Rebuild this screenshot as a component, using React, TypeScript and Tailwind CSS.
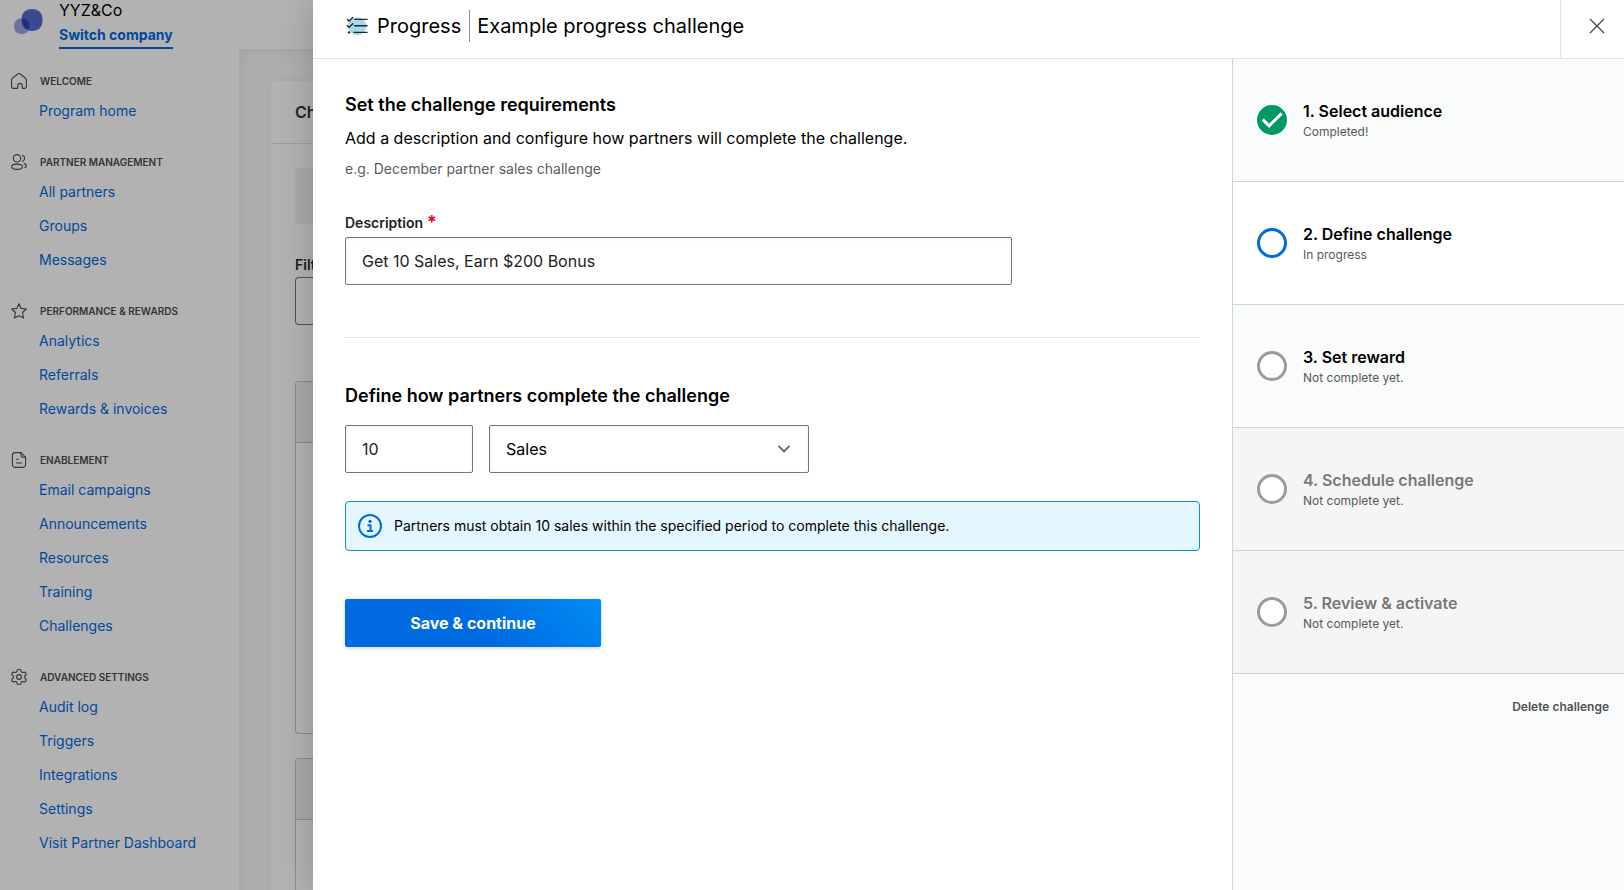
import { useState } from "react";
import type { ReactNode } from "react";
import { Settings } from "lucide-react";

type NavGroup = {
  title: string;
  icon: ReactNode;
  links: string[];
};

type StepStatus = "done" | "current" | "open" | "locked";

type Step = {
  title: string;
  detail: string;
  status: StepStatus;
};

function NavIcon({ children }: { children: ReactNode }) {
  return (
    <svg
      aria-hidden="true"
      className="size-4 shrink-0"
      fill="none"
      stroke="#4d4d4d"
      strokeLinecap="round"
      strokeLinejoin="round"
      strokeWidth="1.1"
      viewBox="0 0 16 16"
    >
      {children}
    </svg>
  );
}

const NAV_GROUPS: NavGroup[] = [
  {
    title: "Welcome",
    icon: (
      <NavIcon>
        <path d="M.6 7.2c0-.8.3-1.5.9-2L6.7 1c.8-.6 1.8-.6 2.6 0l5.2 4.2c.6.5.9 1.2.9 2v6.3c0 1.1-.8 1.9-1.9 1.9h-1.3c-.6 0-1-.4-1-1v-1.8a2.2 2.2 0 0 0-4.4 0v1.8c0 .6-.4 1-1 1H2.5C1.4 15.4.6 14.6.6 13.5z" />
      </NavIcon>
    ),
    links: ["Program home"],
  },
  {
    title: "Partner management",
    icon: (
      <NavIcon>
        <circle cx="6" cy="4.3" r="3.7" />
        <path d="M6 10.1c3 0 5.4 1 5.4 2.7S9 15.4 6 15.4.6 14.5.6 12.8s2.4-2.7 5.4-2.7z" />
        <path d="M11.5 1.2a3.4 3.4 0 0 1 0 6.3M13.2 9.6c1.4.4 2.2 1.2 2.2 2.2 0 .9-.7 1.6-1.8 2" />
      </NavIcon>
    ),
    links: ["All partners", "Groups", "Messages"],
  },
  {
    title: "Performance & rewards",
    icon: (
      <NavIcon>
        <path d="M8 .8l2.1 4.6 5.2.6-3.8 3.5 1.1 5.6L8 12.7l-4.6 2.4 1.1-5.6L.7 6l5.2-.6z" />
      </NavIcon>
    ),
    links: ["Analytics", "Referrals", "Rewards & invoices"],
  },
  {
    title: "Enablement",
    icon: (
      <NavIcon>
        <path d="M10 .6H4.3a2.9 2.9 0 0 0-2.9 2.9v9a2.9 2.9 0 0 0 2.9 2.9h7.4a2.9 2.9 0 0 0 2.9-2.9V5.3z" />
        <path d="M10 .6v2.5c0 1.2.9 2.2 2.1 2.2h2.5M5.6 7.3h1.6M5.6 11h4.8" />
      </NavIcon>
    ),
    links: [
      "Email campaigns",
      "Announcements",
      "Resources",
      "Training",
      "Challenges",
    ],
  },
  {
    title: "Advanced settings",
    icon: (
      <NavIcon>
        <Settings color="#4d4d4d" size={19} strokeWidth={1.4} x={-1.5} y={-1.5} />
      </NavIcon>
    ),
    links: [
      "Audit log",
      "Triggers",
      "Integrations",
      "Settings",
      "Visit Partner Dashboard",
    ],
  },
];

const STEPS: Step[] = [
  { title: "1. Select audience", detail: "Completed!", status: "done" },
  { title: "2. Define challenge", detail: "In progress", status: "current" },
  { title: "3. Set reward", detail: "Not complete yet.", status: "open" },
  { title: "4. Schedule challenge", detail: "Not complete yet.", status: "locked" },
  { title: "5. Review & activate", detail: "Not complete yet.", status: "locked" },
];

const STEP_BACKGROUND: Record<StepStatus, string> = {
  done: "bg-[#fafcfb]",
  current: "bg-white",
  open: "bg-[#fafcfb]",
  locked: "bg-[#f5f5f5]",
};

function Sidebar() {
  return (
    <aside className="w-[239px] shrink-0 bg-white">
      <div className="flex h-[68px] gap-[15px] pl-3">
        <svg
          aria-hidden="true"
          className="mt-2 h-7 w-8 shrink-0"
          viewBox="0 0 32 28"
        >
          <rect x="2" y="10.5" width="15.5" height="15.5" rx="7" fill="#98a6e6" />
          <rect x="9.5" y="1" width="21" height="22" rx="9.5" fill="#5567d2" />
          <path
            d="M10.5 10.6c4-.6 7.3 3 6.9 7.4-.1 1.4-.6 2.6-1.3 3.6-3.8-1.5-6.6-5.7-5.6-11z"
            fill="#33449f"
          />
        </svg>
        <div className="flex flex-col items-start">
          <span className="text-base leading-5 text-black">YYZ&amp;Co</span>
          <a
            className="flex h-[29px] items-center border-b-2 border-[#006ae0] pt-[2px] text-sm font-bold text-[#006ae0]"
            href="#switch"
          >
            Switch company
          </a>
        </div>
      </div>
      <nav>
        {NAV_GROUPS.map((group) => (
          <section className="pb-[21px] pl-[11px]" key={group.title}>
            <h2 className="flex h-[26px] items-center gap-[13px] text-[10px] font-semibold text-[#4d4d4d] uppercase">
              {group.icon}
              {group.title}
            </h2>
            <ul className="pl-7">
              {group.links.map((link) => (
                <li className="flex h-[34px] items-center" key={link}>
                  <a className="text-sm text-[#006ae0]" href="#nav">
                    {link}
                  </a>
                </li>
              ))}
            </ul>
          </section>
        ))}
      </nav>
    </aside>
  );
}

// Only a narrow strip of this page shows beside the drawer.
function ChallengesPage() {
  return (
    <div className="flex min-w-0 flex-1 flex-col">
      <div className="h-[49px] shrink-0 bg-white" />
      <div className="flex-1 bg-[#f8fafc] pt-8 pl-8 shadow-[inset_4px_4px_12px_rgba(0,0,0,0.06)]">
        <div className="h-full rounded-tl bg-white shadow-[0_0_12px_rgba(0,0,0,0.05)]">
          <div className="flex h-[63px] items-center border-b border-[#e3e3e3] pl-6">
            <h2 className="font-semibold text-[#2f363d]">Ch</h2>
          </div>
          <div className="pt-6 pl-6">
            <div className="h-14 rounded-l bg-[#eff5fa]" />
            <div className="mt-[31px] text-sm font-semibold text-[#2b2b2b]">
              Filt
            </div>
            <div className="mt-[2px] h-12 rounded-l-sm border border-r-0 border-[#767676]" />
            <div className="mt-14 h-[353px] rounded-l-sm border border-r-0 border-[#c4c8ca]">
              <div className="h-[61px] border-b border-[#c4c8ca] bg-[#f0f4f3]" />
            </div>
            <div className="mt-6 h-[353px] rounded-l-sm border border-r-0 border-[#c4c8ca]">
              <div className="h-[61px] border-b border-[#c4c8ca] bg-[#f0f4f3]" />
            </div>
          </div>
        </div>
      </div>
    </div>
  );
}

function ProgressIcon() {
  return (
    <svg aria-hidden="true" className="h-5 w-6 shrink-0" viewBox="0 0 24 20">
      <circle cx="12.2" cy="10.2" r="9" fill="#a8d8ea" />
      <g fill="none" stroke="#1f2a33" strokeLinecap="round" strokeWidth="1.4">
        <path d="M10 3.4h12M9.5 9.8H22M9 16.4h13" />
        <path d="M2.4 3.6l1.6 1.5 3.8-3.6M2.4 9.8L4 11.3l3.8-3.6" />
      </g>
      <circle cx="4" cy="16.4" r="1.2" fill="#1f2a33" />
    </svg>
  );
}

function StepMarker({ status }: { status: StepStatus }) {
  if (status === "done") {
    return (
      <svg aria-hidden="true" className="size-[30px] shrink-0" viewBox="0 0 30 30">
        <circle cx="15" cy="15" r="15" fill="#009966" />
        <path
          d="M5.8 14.6l6.4 6.2L24.6 8.4"
          fill="none"
          stroke="#fff"
          strokeWidth="3"
        />
      </svg>
    );
  }

  return (
    <span
      className={`size-[30px] shrink-0 rounded-full border-3 bg-white ${
        status === "current" ? "border-[#006ae0]" : "border-[#999c9f]"
      }`}
    />
  );
}

function StepList() {
  return (
    <aside className="w-[392px] shrink-0 border-l border-[#cfd4d8] bg-[#fafcfb]">
      <ol>
        {STEPS.map((step) => (
          <li
            className={`flex h-[123px] items-center gap-4 border-b border-[#cfd4d8] pl-6 ${STEP_BACKGROUND[step.status]}`}
            key={step.title}
          >
            <StepMarker status={step.status} />
            <div>
              <h3
                className={`text-base leading-6 font-semibold ${
                  step.status === "locked" ? "text-[#77797b]" : "text-black"
                }`}
              >
                {step.title}
              </h3>
              <p className="text-xs leading-[18px] text-[#57595b]">
                {step.detail}
              </p>
            </div>
          </li>
        ))}
      </ol>
      <div className="flex justify-end pt-6 pr-[15px]">
        <button
          type="button"
          className="cursor-pointer text-xs leading-[18px] font-semibold text-[#4f5153]"
        >
          Delete challenge
        </button>
      </div>
    </aside>
  );
}

function ChallengeForm() {
  const [description, setDescription] = useState("Get 10 Sales, Earn $200 Bonus");
  const [amount, setAmount] = useState("10");
  const [metric, setMetric] = useState("Sales");

  return (
    <form
      className="min-w-0 flex-1 px-8 pt-8"
      onSubmit={(event) => event.preventDefault()}
    >
      <h2 className="text-lg leading-7 font-semibold text-black">
        Set the challenge requirements
      </h2>
      <p className="mt-[7px] text-base leading-6 text-black">
        Add a description and configure how partners will complete the challenge.
      </p>
      <p className="mt-[9px] text-sm leading-5 text-[#5a5c5f]">
        e.g. December partner sales challenge
      </p>

      <label
        className="mt-8 flex h-[26px] gap-1 text-sm leading-6 font-semibold text-[#222222]"
        htmlFor="description"
      >
        Description
        <span className="text-lg leading-6 text-[#e0001b]">*</span>
      </label>
      <input
        id="description"
        className="h-12 w-full max-w-[667px] rounded-xs border border-[#767676] px-4 text-base text-[#222222] shadow-[inset_0_1px_4px_rgba(0,0,0,0.06)]"
        value={description}
        onChange={(event) => setDescription(event.target.value)}
      />

      <hr className="mt-[52px] border-[#dfe3e9]" />

      <h2 className="mt-11 text-lg leading-7 font-semibold text-black">
        Define how partners complete the challenge
      </h2>
      <div className="mt-[15px] flex gap-4">
        <input
          aria-label="Amount"
          className="h-12 w-32 rounded-xs border border-[#767676] px-4 text-base text-[#222222] shadow-[inset_0_1px_4px_rgba(0,0,0,0.06)]"
          value={amount}
          onChange={(event) => setAmount(event.target.value)}
        />
        <div className="grid w-80 items-center">
          <select
            aria-label="Metric"
            className="col-start-1 row-start-1 h-12 w-full appearance-none rounded-xs border border-[#767676] bg-white px-4 text-base text-black shadow-[inset_0_1px_4px_rgba(0,0,0,0.06)]"
            value={metric}
            onChange={(event) => setMetric(event.target.value)}
          >
            <option>Sales</option>
          </select>
          <svg
            aria-hidden="true"
            className="pointer-events-none col-start-1 row-start-1 mr-[19px] h-2 w-3 justify-self-end"
            fill="none"
            stroke="#5f6b7a"
            strokeWidth="1.8"
            viewBox="0 0 12 8"
          >
            <path d="M.6 1L6 6.4 11.4 1" />
          </svg>
        </div>
      </div>

      <div className="mt-7 flex h-[50px] items-center gap-3 rounded-sm border border-[#0c8fd0] bg-[#e4f7fe] px-3 text-sm text-black">
        <svg aria-hidden="true" className="size-6 shrink-0" viewBox="0 0 24 24">
          <circle cx="12" cy="12" r="11" fill="none" stroke="#006ae0" strokeWidth="2" />
          <circle cx="12" cy="7.4" r="1.6" fill="#006ae0" />
          <path
            d="M9.5 11.2h3V17M9 17h6"
            fill="none"
            stroke="#006ae0"
            strokeWidth="2"
          />
        </svg>
        Partners must obtain {amount} sales within the specified period to complete
        this challenge.
      </div>

      <button
        type="submit"
        className="mt-12 h-12 w-64 cursor-pointer rounded-xs bg-linear-45 from-[#006ae0] from-50% to-[#008cf5] text-base font-bold text-white shadow-[0_1px_4px_rgba(0,0,0,0.2)]"
      >
        Save &amp; continue
      </button>
    </form>
  );
}

function ChallengeDrawer() {
  return (
    <div
      role="dialog"
      aria-label="Example progress challenge"
      className="z-10 flex min-w-0 flex-1 flex-col bg-white shadow-[0_0_32px_rgba(0,0,0,0.2)]"
    >
      <header className="flex h-[59px] shrink-0 border-b border-[#d9e5f0]">
        <div className="flex h-[52px] flex-1 items-center pl-8 text-xl text-black">
          <ProgressIcon />
          <span className="ml-2 border-r border-[#8a8d91] pr-2 leading-8">
            Progress
          </span>
          <h1 className="ml-[7px]">Example progress challenge</h1>
        </div>
        <button
          type="button"
          aria-label="Close"
          className="flex w-16 cursor-pointer items-center justify-center border-l border-[#d9e5f0] pr-px pb-[6px] pl-[9px]"
        >
          <svg
            aria-hidden="true"
            className="size-4"
            fill="none"
            stroke="#4a4a4a"
            strokeWidth="1.3"
            viewBox="0 0 16 16"
          >
            <path d="M1 1l14 14M15 1L1 15" />
          </svg>
        </button>
      </header>
      <div className="flex flex-1">
        <ChallengeForm />
        <StepList />
      </div>
    </div>
  );
}

export default function App() {
  return (
    <div className="flex h-screen overflow-hidden font-['Inter',sans-serif]">
      <div className="relative flex w-[313px] shrink-0 overflow-hidden">
        <Sidebar />
        <ChallengesPage />
        <div className="absolute inset-0 bg-black/30" />
      </div>
      <ChallengeDrawer />
    </div>
  );
}
